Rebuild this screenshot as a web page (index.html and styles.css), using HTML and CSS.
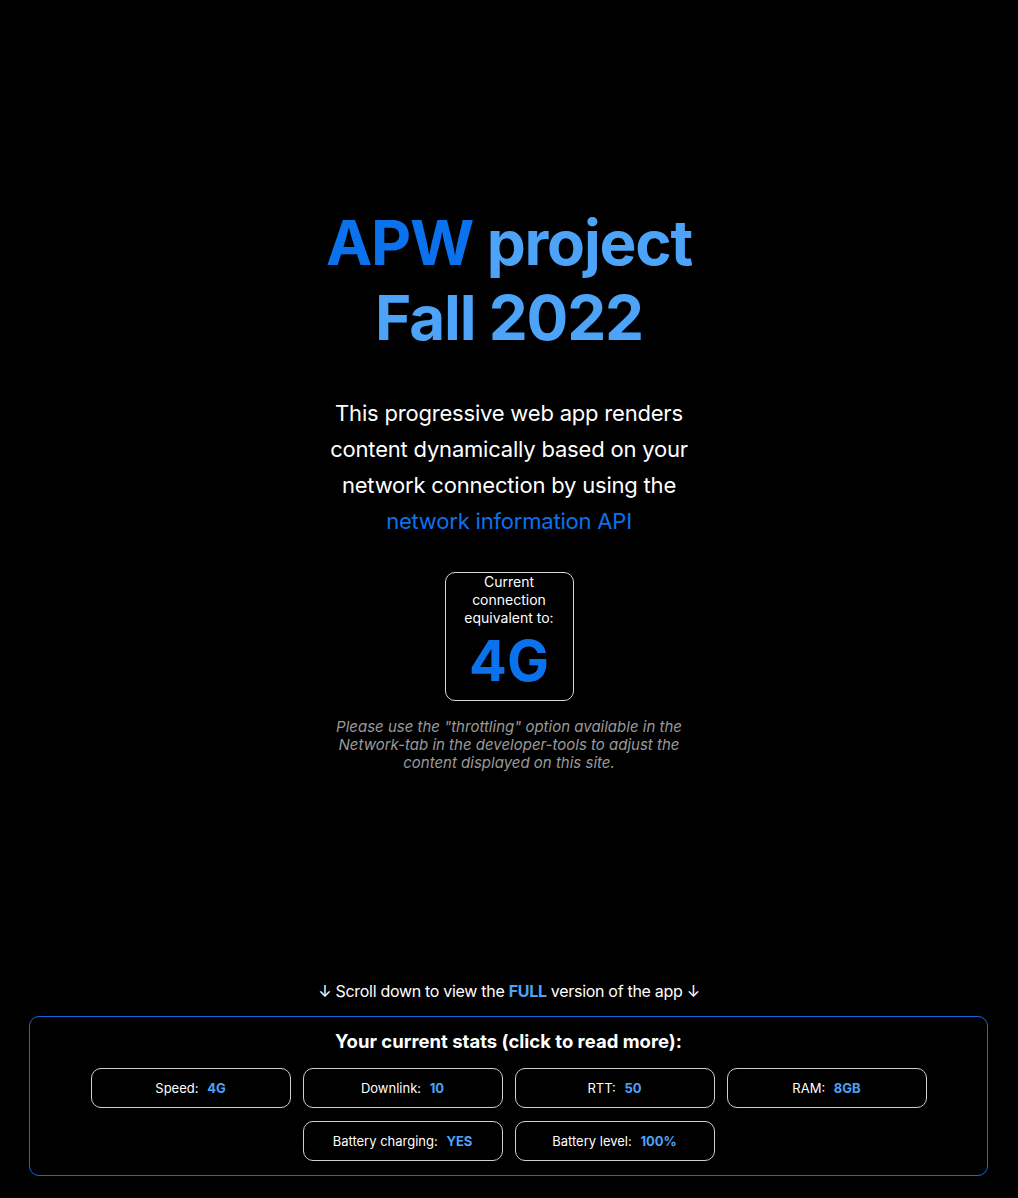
FILE: index.html
```html
<!DOCTYPE html>
<html lang="en">
<head>
<meta charset="utf-8">
<title>APW project Fall 2022</title>
<link rel="stylesheet" href="styles.css">
</head>
<body>
<main class="hero">
  <h1 class="title"><span class="title-strong">APW</span> project<br>Fall 2022</h1>
  <p class="intro">This progressive web app renders content dynamically based on your network connection by using the <a class="intro-link" href="#">network information API</a></p>
  <div class="conn">
    <div class="conn-label">Current connection equivalent to:</div>
    <div class="conn-value">4G</div>
  </div>
  <p class="note">Please use the "throttling" option available in the Network-tab in the developer-tools to adjust the content displayed on this site.</p>
</main>
<p class="scroll">↓ Scroll down to view the <strong class="scroll-full">FULL</strong> version of the app ↓</p>
<section class="stats">
  <h2 class="stats-title">Your current stats (click to read more):</h2>
  <div class="stats-grid">
    <button class="pill">Speed: <span class="pill-value">4G</span></button>
    <button class="pill">Downlink: <span class="pill-value">10</span></button>
    <button class="pill">RTT: <span class="pill-value">50</span></button>
    <button class="pill">RAM: <span class="pill-value">8GB</span></button>
    <button class="pill">Battery charging: <span class="pill-value">YES</span></button>
    <button class="pill">Battery level: <span class="pill-value">100%</span></button>
  </div>
</section>
</body>
</html>
```
FILE: styles.css
```css
html, body {
  margin: 0;
  padding: 0;
  background: #000;
  color: #fff;
  font-family: Inter, "Noto Sans", "Liberation Sans", sans-serif;
}

.hero {
  padding-top: 205px;
  text-align: center;
}

.title {
  margin: 0;
  font-size: 62px;
  line-height: 75px;
  font-weight: 700;
  letter-spacing: -1.2px;
  color: #4ca3f8;
}

.title-strong {
  color: #0b72ee;
}

.intro {
  margin: 40px auto 0;
  max-width: 372px;
  font-size: 22px;
  line-height: 36px;
  letter-spacing: -0.2px;
}

.intro-link {
  color: #0b72ee;
  text-decoration: none;
}

.conn {
  box-sizing: border-box;
  width: 129px;
  height: 129px;
  margin: 33px auto 0;
  padding: 0 4px;
  border: 1px solid #d8d8d8;
  border-radius: 10px;
  display: flex;
  flex-direction: column;
  align-items: center;
}

.conn-label {
  font-size: 14px;
  line-height: 18px;
  padding-top: 0;
}

.conn-value {
  font-size: 56px;
  line-height: 68px;
  font-weight: 700;
  color: #0b72ee;
}

.note {
  margin: 17px auto 0;
  max-width: 364px;
  font-size: 15px;
  line-height: 18px;
  font-style: italic;
  color: #9a9a9a;
}

.scroll {
  margin: 209px 0 0;
  text-align: center;
  font-size: 16px;
  line-height: 20px;
  letter-spacing: -0.3px;
}

.scroll-full {
  color: #4ca3f8;
  font-weight: 700;
}

.stats {
  margin: 15px 30px 23px 29px;
  padding: 13px 0 14px;
  border: 1px solid #1769e0;
  border-radius: 10px;
  text-align: center;
}

.stats-title {
  margin: 0;
  font-size: 18.5px;
  line-height: 22px;
  font-weight: 700;
}

.stats-grid {
  margin-top: 16px;
  display: flex;
  flex-wrap: wrap;
  justify-content: center;
  gap: 13px 12px;
}

.pill {
  box-sizing: border-box;
  width: 200px;
  height: 40px;
  background: #000;
  color: #fff;
  border: 1px solid #cfcfcf;
  border-radius: 10px;
  font-family: inherit;
  font-size: 13px;
  cursor: pointer;
}

.pill-value {
  margin-left: 5px;
  color: #4ca3f8;
  font-weight: 700;
}
```
